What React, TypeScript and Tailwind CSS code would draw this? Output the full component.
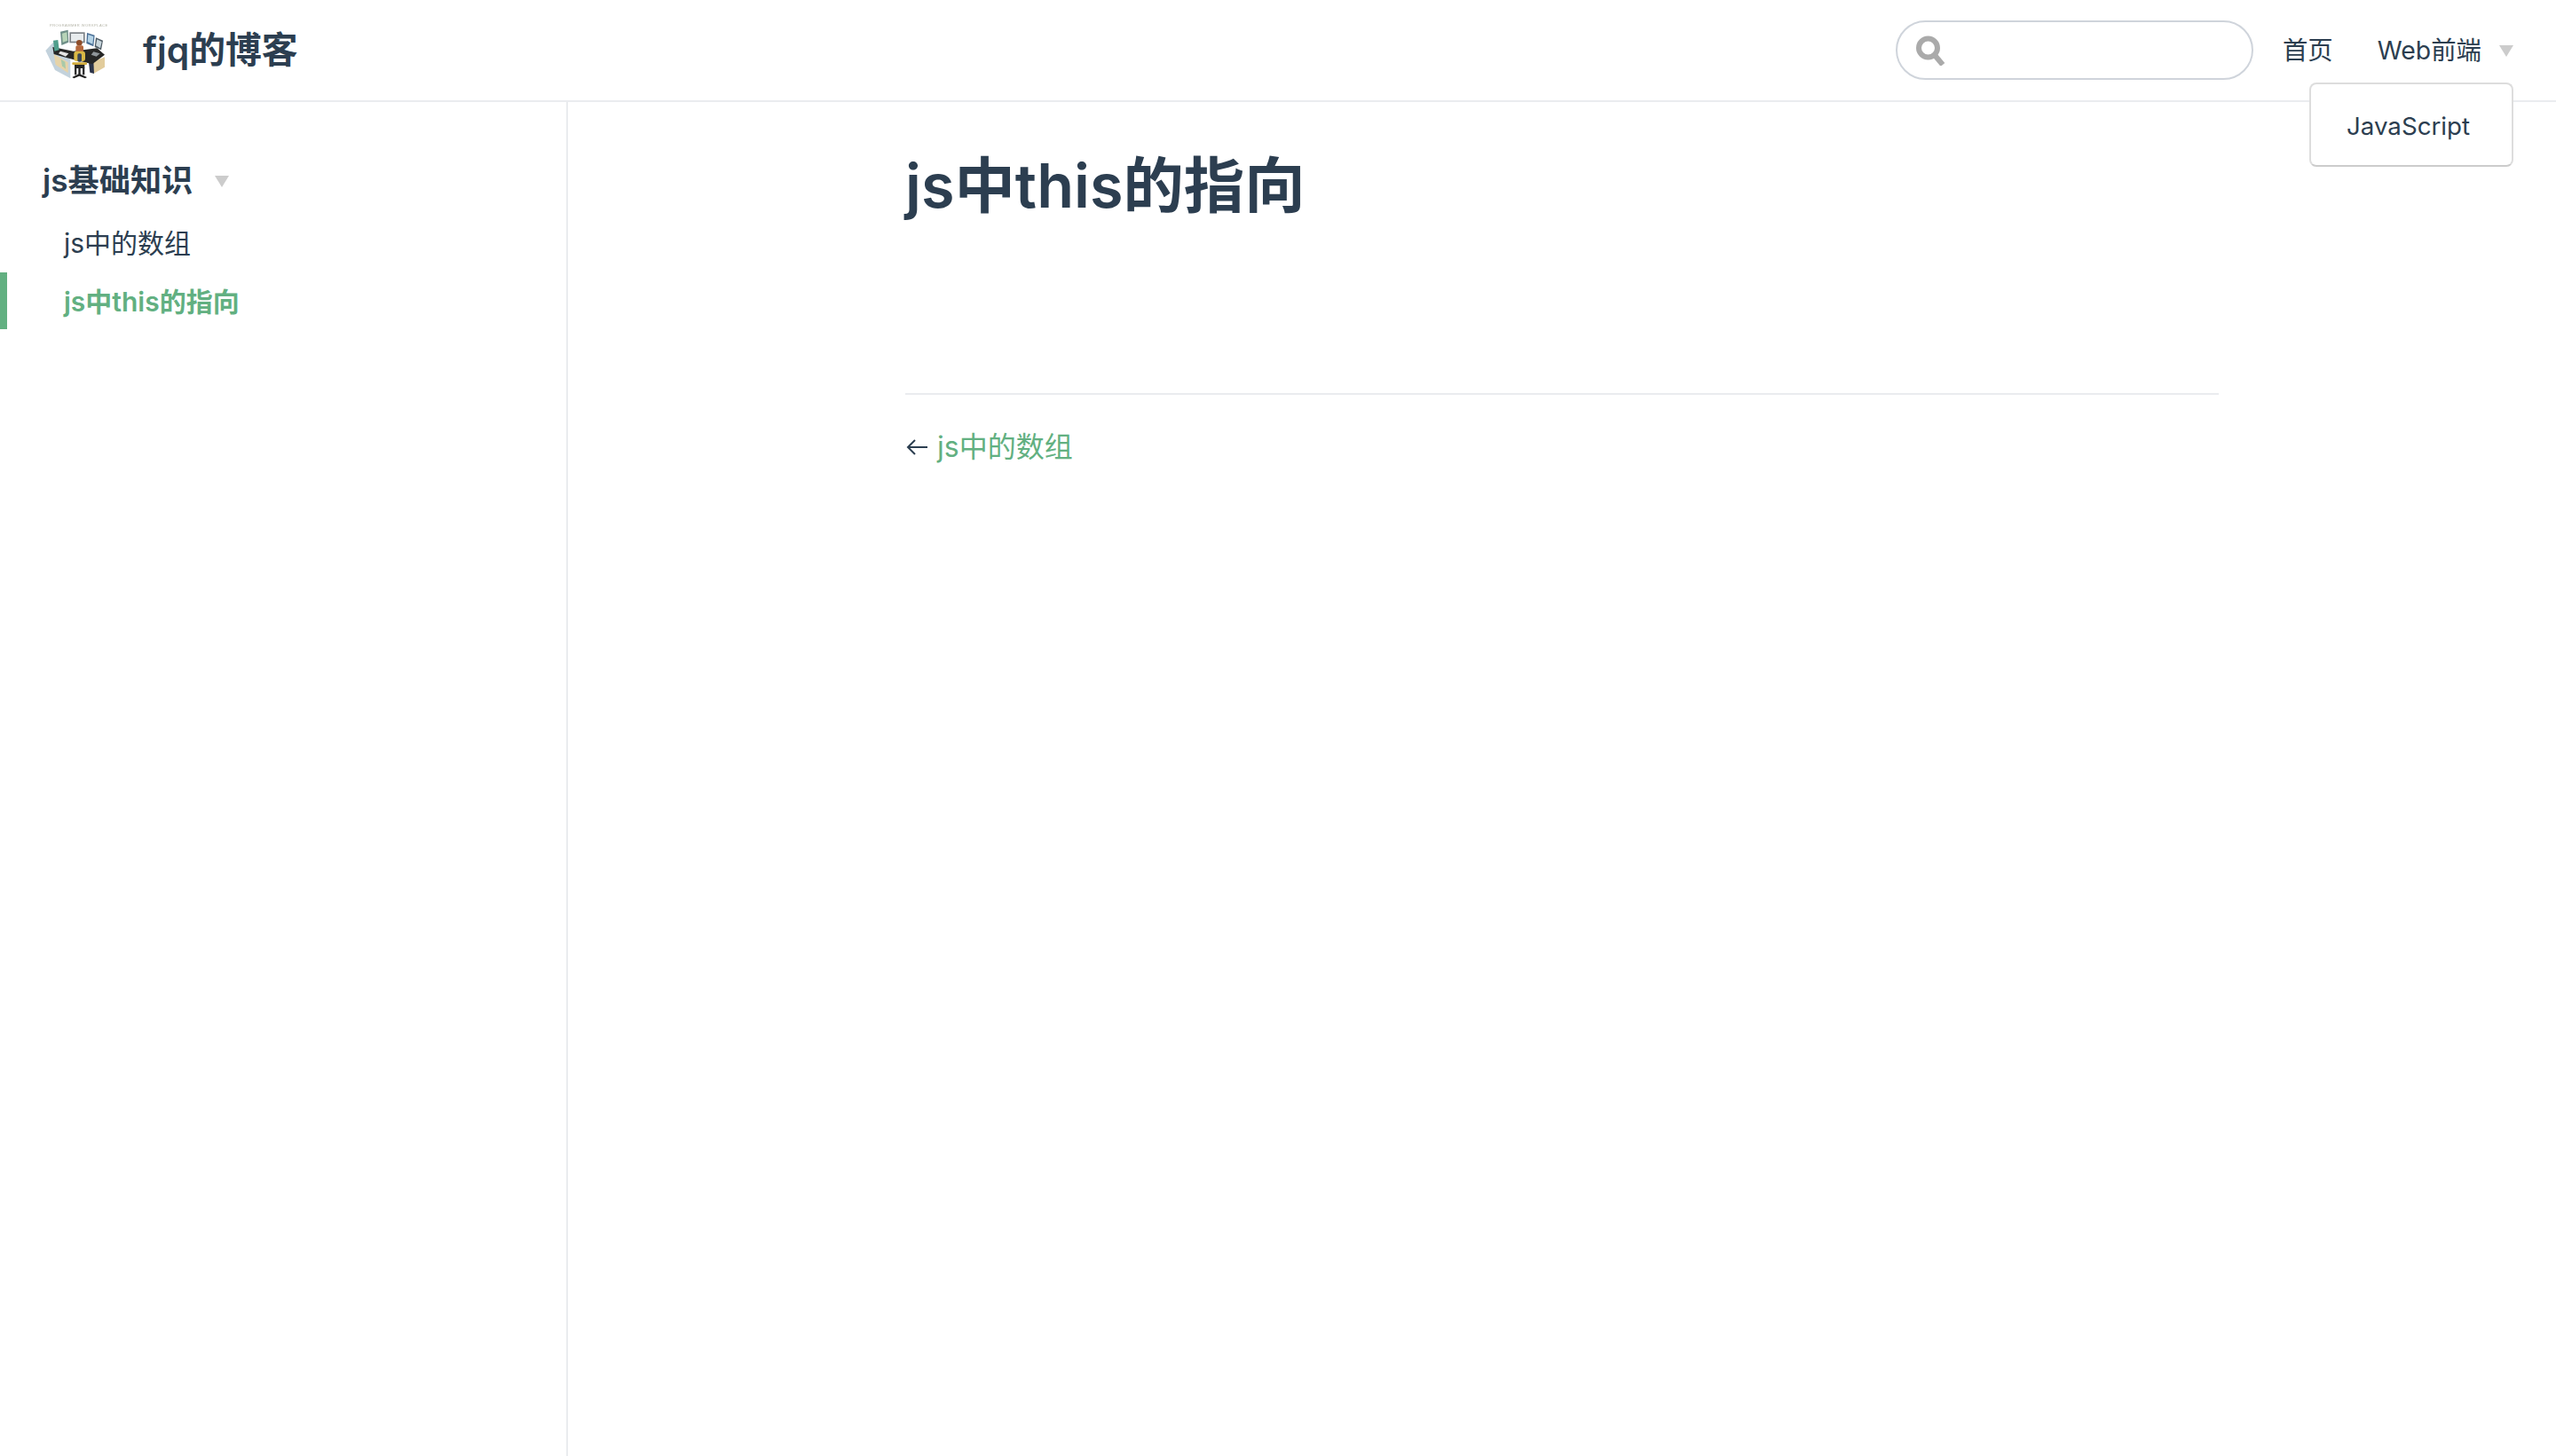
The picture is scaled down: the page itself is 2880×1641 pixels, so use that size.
function Logo() {
  return (
    <svg viewBox="0 0 270 240" className="w-[90px] h-[80px] shrink-0 blur-[0.6px]">
      <text x="48" y="39" fontSize="12" letterSpacing="1.4" fill="#b5b5a8" fontFamily="Liberation Sans, sans-serif">PROGRAMMER WORKPLACE</text>
      <polygon points="34,120 60,92 118,150 118,214 66,186" fill="#c3d2dc" />
      <polygon points="62,132 110,160 110,196 68,168" fill="#e6d3a8" />
      <polygon points="234,142 234,176 196,198 190,160" fill="#e2cc9c" />
      <polygon points="180,160 196,156 198,198 184,194" fill="#2b3348" />
      <polygon points="58,108 128,122 208,112 234,134 192,166 118,148 62,132" fill="#262626" />
      <polygon points="60,86 76,84 80,118 64,122" fill="#4f9e8c" />
      <polygon points="84,56 110,50 112,92 88,102" fill="#6f8f88" />
      <polygon points="90,62 106,58 108,86 92,92" fill="#b7d4b7" />
      <rect x="115" y="58" width="52" height="36" fill="#7d8287" />
      <rect x="120" y="63" width="42" height="26" fill="#e8ecee" />
      <polygon points="174,60 200,68 196,106 172,96" fill="#4a6f96" />
      <polygon points="178,66 196,72 193,98 176,90" fill="#b5d3e6" />
      <polygon points="204,76 228,86 222,118 200,108" fill="#4d5a64" />
      <polygon points="208,82 224,90 219,112 204,103" fill="#c8d6dd" />
      <polygon points="84,122 112,130 102,140 78,130" fill="#e4e4e4" />
      <polygon points="196,124 218,130 206,140 188,134" fill="#8f959a" />
      <polygon points="86,150 100,158 102,182 90,172" fill="#a9c9a8" />
      <circle cx="148" cy="94" r="10" fill="#8f4d2a" />
      <rect x="136" y="103" width="26" height="22" rx="5" fill="#b5673c" />
      <rect x="130" y="122" width="38" height="34" rx="9" fill="#d9b845" />
      <rect x="142" y="130" width="14" height="28" rx="5" fill="#3a4656" />
      <rect x="124" y="160" width="50" height="8" rx="3" fill="#cfa93a" />
      <rect x="132" y="168" width="34" height="12" fill="#262626" />
      <rect x="145" y="180" width="7" height="22" fill="#222" />
      <polygon points="124,210 148,198 174,210 168,214 148,206 130,214" fill="#222" />
      <rect x="132" y="178" width="7" height="24" fill="#2c2c2c" />
      <rect x="159" y="178" width="7" height="24" fill="#2c2c2c" />
    </svg>
  )
}

function Caret() {
  return <span className="w-0 h-0 border-l-[8px] border-r-[8px] border-t-[13px] border-l-transparent border-r-transparent border-t-[#cccccc]"></span>
}

function App() {
  return (
    <div className="min-h-[1641px] bg-white text-[#2c3e50] [font-family:Inter,'Noto_Sans_CJK_SC',sans-serif]">
      <header className="h-[115px] flex items-center justify-between pl-[40px] pr-[48px] border-b-2 border-[#eaecef]">
        <div className="flex items-center gap-[31px]">
          <Logo />
          <span className="text-[40.8px] leading-none font-semibold">fjq的博客</span>
        </div>
        <nav className="flex items-center text-[28.4px]">
          <label className="w-[403px] h-[67px] flex items-center gap-[12px] pl-[20px] border-2 border-[#cfd4db] rounded-full">
            <svg viewBox="0 0 34 34" className="w-[34px] h-[34px] shrink-0">
              <circle cx="14.5" cy="14" r="10.5" fill="none" stroke="#aaaaaa" strokeWidth="6" />
              <path d="M21 21l10 12" stroke="#aaaaaa" strokeWidth="6" />
            </svg>
            <input className="w-full outline-none bg-transparent" />
          </label>
          <a className="ml-[33px] pt-[2px]">首页</a>
          <div className="relative flex items-center ml-[50px]">
            <a className="pt-[2px]">Web前端</a>
            <span className="flex ml-[20px] mt-[2px]"><Caret /></span>
            <div className="absolute top-[59px] right-0 w-[230px] h-[95px] flex items-center pl-[40px] pt-[4px] text-[27.7px] bg-white border-2 border-[#dddddd] border-b-[#cccccc] rounded-lg">
              JavaScript
            </div>
          </div>
        </nav>
      </header>

      <div className="flex">
        <aside className="w-[640px] min-h-[1526px] shrink-0 pt-[66px] border-r-2 border-[#eaecef]">
          <div className="flex items-center pl-[48px] h-[44px] text-[35.2px] font-semibold">
            <span>js基础知识</span>
            <span className="flex ml-[25px] mt-[2px]"><Caret /></span>
          </div>
          <ul className="mt-[16px] flex flex-col gap-[2px] text-[30px]">
            <li className="h-[64px] flex items-center pl-[64px] pt-[2px] border-l-8 border-transparent">js中的数组</li>
            <li className="h-[64px] flex items-center pl-[64px] pt-[2px] border-l-8 border-[#62b081] text-[#62b081] font-semibold">js中this的指向</li>
          </ul>
        </aside>

        <main className="flex-1">
          <div className="w-[1480px] mx-auto pt-[49px]">
            <h1 className="text-[68.4px] leading-[90px] font-semibold">js中this的指向</h1>
            <div className="mt-[189px] border-t-2 border-[#eaecef]"></div>
            <div className="mt-[37px] flex items-center gap-[10px] text-[32px] leading-[44px]">
              <svg viewBox="0 0 26 22" className="w-[26px] h-[22px] shrink-0">
                <path d="M25 11H3M11 3l-8 8 8 8" fill="none" stroke="#2c3e50" strokeWidth="2" />
              </svg>
              <a className="text-[#62b081]">js中的数组</a>
            </div>
          </div>
        </main>
      </div>
    </div>
  )
}

export default App
